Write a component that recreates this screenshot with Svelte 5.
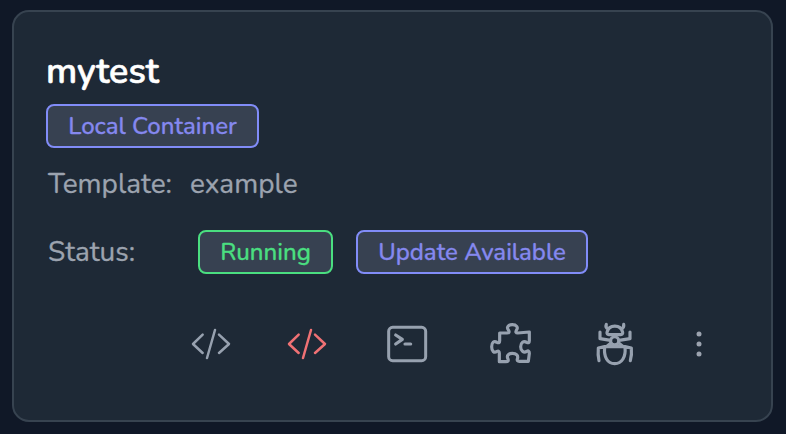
<script>
  const editors = ['plain', 'alert'];
</script>

<main>
  <article class="card">
    <h1>mytest</h1>
    <span class="badge local">Local Container</span>
    <div class="row template"><span class="label">Template:</span><span class="value">example</span></div>
    <div class="row status">
      <span class="label state">Status:</span>
      <span class="badge running">Running</span>
      <span class="badge update">Update Available</span>
    </div>
    <div class="actions">
      {#each editors as tone}
        <svg class={tone} viewBox="0 0 180 180" aria-label="Open editor">
          <path stroke-width="7.5" d="M65 59 36 87l29 27M102 45 78 129M114 59l30 28-30 27" />
        </svg>
      {/each}
      <svg viewBox="0 0 180 180" aria-label="Terminal">
        <rect x="35" y="37" width="111" height="100" rx="12" stroke-width="9" />
        <path stroke-width="9.5" d="m56 60 20 13-20 14M84 87h17" />
      </svg>
      <svg viewBox="0 0 180 180" aria-label="Extensions">
        <path stroke-width="9.5" d="M56 54H78Q87 54 83 46C75 37 82 29 94 29S113 37 106 46Q102 54 110 54L145 51V77Q145 86 137 82C128 76 119 83 119 95S128 115 137 109Q145 105 145 115L142 139H115Q107 139 109 132C113 122 106 115 94 115S76 122 81 132Q84 140 75 140H55V115Q55 106 48 109C39 116 32 108 32 95S39 76 48 82Q56 86 56 77Z" />
      </svg>
      <svg viewBox="0 0 180 180" aria-label="Debug">
        <path stroke-width="9.5" d="M64 28Q60 37 70 43M116 28Q118 37 109 43M66 52C72 27 107 27 113 52Q114 58 107 59H72Q65 58 66 52ZM77 76 45 71V51M102 76l33-5V51M78 84 66 94M101 84l12 10M42 137Q38 119 40 99L59 95H120L139 99Q141 119 136 137M59 97C56 125 67 146 89 146S123 125 120 97" />
        <circle cx="89" cy="77" r="12" stroke-width="9" />
      </svg>
      <svg class="dots" viewBox="0 0 180 180" aria-label="More">
        <circle cx="90" cy="57" r="7.5" /><circle cx="90" cy="87" r="7.5" /><circle cx="90" cy="117" r="7.5" />
      </svg>
    </div>
  </article>
</main>

<style>
  :global(body) { background: #101827; }
  main { box-sizing: border-box; width: 786px; height: 434px; padding: 10px 13px 12px 12px; font-family: Nunito, Lato, "Open Sans", sans-serif; }
  .card { box-sizing: border-box; height: 412px; padding: 37px 32px 0; border: 2px solid #374350; border-radius: 17px; background: #1e2936; overflow: hidden; }
  h1 { margin: 0; height: 45px; line-height: 46px; font-size: 36px; font-weight: 600; color: #fff; -webkit-text-stroke: .6px; }
  .badge { display: flex; align-items: center; justify-content: center; box-sizing: border-box; height: 44px; border: 2px solid #818cf8; border-radius: 8px; background: #374151; color: #8588ef; font-size: 24px; font-weight: 500; white-space: nowrap; padding-bottom: 1px; -webkit-text-stroke: .3px; }
  .local { width: 213px; margin-top: 10px; }
  .row { display: flex; align-items: center; color: #9ca3af; font-size: 28px; white-space: nowrap; -webkit-text-stroke: .3px; }
  .template { height: 44px; margin-top: 14px; padding-left: 2px; }
  .template .label { width: 142px; }
  .status { height: 44px; margin-top: 24px; padding-left: 2px; }
  .state { width: 150px; }
  .running { width: 135px; color: #4ade80; border-color: #4ade80; }
  .update { width: 232px; margin-left: 23px; }
  .actions { display: grid; grid-template-columns: 96px 96px 104px 104px 104px 64px; justify-items: center; margin: 41px 0 0 117px; }
  svg { width: 60px; height: 60px; fill: none; stroke: #97a1af; stroke-linecap: round; stroke-linejoin: round; }
  .alert { stroke: #f07174; }
  .dots { fill: #9ca3af; stroke: none; }
</style>
